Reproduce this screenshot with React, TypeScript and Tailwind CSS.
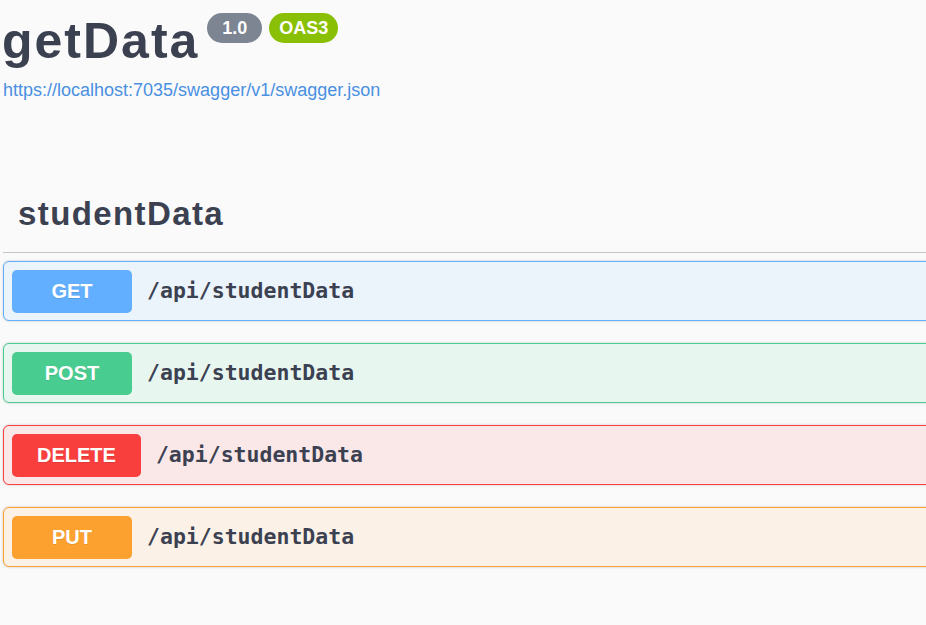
import React from "react";

type Op = {
  method: string;
  path: string;
  badge: string;
  block: string;
};

const ops: Op[] = [
  { method: "GET", path: "/api/studentData", badge: "bg-[#61affe]", block: "bg-[#ebf3fb] border-[#61affe]" },
  { method: "POST", path: "/api/studentData", badge: "bg-[#49cc90]", block: "bg-[#e8f6f0] border-[#49cc90]" },
  { method: "DELETE", path: "/api/studentData", badge: "bg-[#f93e3e]", block: "bg-[#fae7e7] border-[#f93e3e]" },
  { method: "PUT", path: "/api/studentData", badge: "bg-[#fca130]", block: "bg-[#fbf1e6] border-[#fca130]" },
];

function OpBlock({ op }: { op: Op }) {
  return (
    <div className={`flex items-center h-[60px] w-[1000px] border rounded-[6px] px-[8px] shadow-[0_0_3px_rgba(0,0,0,0.19)] ${op.block}`}>
      <span
        className={`flex items-center justify-center h-[43px] min-w-[120px] px-[25px] rounded-[5px] text-white text-[20px] font-bold [text-shadow:0_1px_0_rgba(0,0,0,0.1)] ${op.badge}`}
      >
        {op.method}
      </span>
      <span className="ml-[15px] text-[21.5px] font-bold text-[#3b4151] font-['DejaVu_Sans_Mono',monospace]">
        {op.path}
      </span>
    </div>
  );
}

export default function App() {
  return (
    <div className="min-h-[625px] w-[926px] overflow-hidden bg-[#fafafa] text-[#3b4151] font-['Liberation_Sans',Arial,sans-serif]">
      <div className="pl-[2px] pt-[13px] flex items-start">
        <h2 className="mt-[1px] text-[50px] leading-[54px] font-bold tracking-[2px]">getData</h2>
        <span className="ml-[8px] flex items-center justify-center w-[55px] h-[30px] rounded-full bg-[#7d8492] text-white text-[18px] font-bold">
          1.0
        </span>
        <span className="ml-[7px] flex items-center justify-center w-[69px] h-[30px] rounded-full bg-[#89bf04] text-white text-[18px] font-bold">
          OAS3
        </span>
      </div>
      <a href="#" className="block ml-[3px] mt-[11px] text-[18px] leading-[22px] text-[#4990e2]">
        https://localhost:7035/swagger/v1/swagger.json
      </a>

      <div className="ml-[3px] mt-[95px]">
        <h3 className="pl-[15px] pb-[20px] border-b border-[#c4c5c9] text-[33px] leading-[36px] font-bold tracking-[1.4px]">
          studentData
        </h3>
        <div className="mt-[8px] flex flex-col gap-[22px]">
          {ops.map((op) => (
            <OpBlock key={op.method} op={op} />
          ))}
        </div>
      </div>
    </div>
  );
}
